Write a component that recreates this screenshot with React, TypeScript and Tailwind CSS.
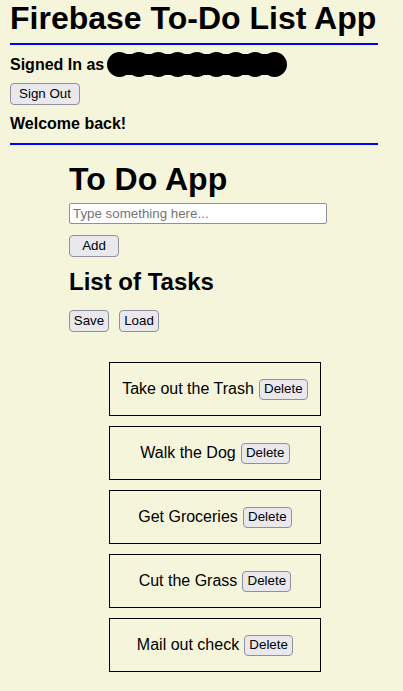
import React from "react"

const tasks = ["Take out the Trash", "Walk the Dog", "Get Groceries", "Cut the Grass", "Mail out check"]

function Btn({ children, className = "" }: { children: React.ReactNode; className?: string }) {
  return (
    <button
      type="button"
      className={`flex items-center justify-center rounded-[4px] border border-[#8f8f9d] bg-[#e9e9ed] text-[13.33px] leading-none text-black ${className}`}
    >
      {children}
    </button>
  )
}

// scribbled-out email
function Redacted() {
  const centers = [12.5, 31.9, 51.3, 70.6, 90, 109.4, 128.8, 148.1, 167.5]
  return (
    <svg width="180" height="25" viewBox="0 0 180 25" className="ml-[3px] block">
      <rect x="12" y="2" width="156" height="21" fill="#000" />
      {centers.map((cx) => (
        <circle key={cx} cx={cx} cy="12.5" r="12.5" fill="#000" />
      ))}
    </svg>
  )
}

export default function App() {
  return (
    <div className="min-h-screen bg-[#f5f5dc] font-['Liberation_Sans',Arial,sans-serif] text-black">
      <div className="px-[10px] pb-4">
        <h1 className="m-0 text-[32px] font-bold leading-[37px]">Firebase To-Do List App</h1>
        <div className="mt-[6px] h-[2px] w-[368px] bg-[#0000ff]" />

        <div className="mt-[7px] flex h-[25px] items-center">
          <span className="text-[16px] font-bold leading-[18px]">Signed In as</span>
          <Redacted />
        </div>
        <Btn className="mt-[6px] h-[22px] w-[70px]">Sign Out</Btn>
        <p className="mt-[10px] text-[16px] font-bold leading-[18px]">Welcome back!</p>
        <div className="mt-[10px] h-[2px] w-[368px] bg-[#0000ff]" />

        <div className="ml-[59px]">
          <h1 className="mt-[16px] text-[32px] font-bold leading-[37px]">To Do App</h1>
          <input
            type="text"
            placeholder="Type something here..."
            className="mt-[5px] block h-[21px] w-[258px] rounded-[2px] border border-[#8f8f9d] bg-white px-[3px] text-[13.33px] text-black outline-none placeholder:text-[#757575]"
          />
          <Btn className="mt-[11px] h-[22px] w-[50px]">Add</Btn>
          <h2 className="mt-[11px] text-[24px] font-bold leading-[28px]">List of Tasks</h2>
          <div className="mt-[14px] flex gap-[10px]">
            <Btn className="h-[22px] w-[40px]">Save</Btn>
            <Btn className="h-[22px] w-[40px]">Load</Btn>
          </div>

          <ul className="mt-[30px] flex flex-col gap-[10px] pl-[40px]">
            {tasks.map((t) => (
              <li
                key={t}
                className="flex h-[54px] w-[212px] items-center justify-center gap-[5px] border border-black"
              >
                <span className="text-[16px] leading-[18px]">{t}</span>
                <Btn className="h-[21px] w-[49px]">Delete</Btn>
              </li>
            ))}
          </ul>
        </div>
      </div>
    </div>
  )
}
